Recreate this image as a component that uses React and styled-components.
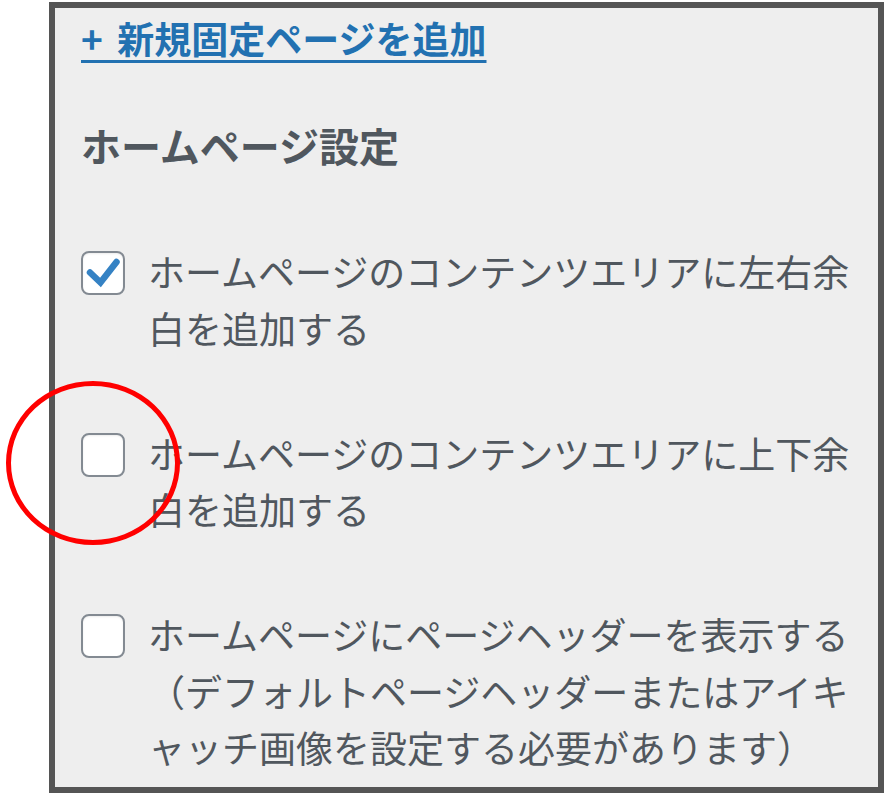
import React from 'react';
import styled, { createGlobalStyle } from 'styled-components';

const GlobalStyle = createGlobalStyle`
  html, body { margin: 0; padding: 0; background: #ffffff; }
  body { font-family: "Noto Sans CJK JP", "Noto Sans", sans-serif; }
`;

const Page = styled.div`
  position: relative;
  width: 886px;
  height: 794px;
  padding: 2px 0 0 49px;
  box-sizing: border-box;
  overflow: hidden;
`;

const Panel = styled.section`
  width: 835px;
  height: 791px;
  box-sizing: border-box;
  border: 6px solid #555555;
  background: #eeeeee;
  padding: 2px 20px 0 26px;
  overflow: hidden;
  display: flex;
  flex-direction: column;
`;

const AddLink = styled.a`
  align-self: flex-start;
  font-size: 37px;
  line-height: 56.5px;
  font-weight: 700;
  color: #2271b1;
  text-decoration: underline;
  text-decoration-thickness: 3px;
  text-underline-offset: 6px;
  word-spacing: 6px;
  cursor: pointer;
`;

const Heading = styled.h3`
  margin: 49px 0 0;
  font-size: 40px;
  line-height: 58.8px;
  font-weight: 700;
  color: #50575e;
`;

const Options = styled.div`
  margin-top: 69px;
  display: flex;
  flex-direction: column;
  gap: 68.5px;
`;

const Option = styled.label`
  display: flex;
  align-items: flex-start;
  gap: 23px;
`;

const Box = styled.span`
  position: relative;
  flex-shrink: 0;
  width: 44px;
  height: 44px;
  margin-top: 8px;
  box-sizing: border-box;
  border: 2px solid #838a92;
  border-radius: 8px;
  background: #ffffff;
  box-shadow: inset 0 1px 2px rgba(0, 0, 0, 0.08);
`;

const CheckIcon = styled.svg`
  position: absolute;
  left: -2px;
  top: -2px;
`;

const LabelText = styled.span`
  flex: 1;
  font-size: 37px;
  line-height: 56.5px;
  color: #50575e;
  line-break: normal;
`;

const Annotation = styled.div`
  position: absolute;
  left: 6px;
  top: 381px;
  width: 174px;
  height: 164px;
  box-sizing: border-box;
  border: 5px solid #ff0000;
  border-radius: 50%;
  pointer-events: none;
`;

const CheckBox = ({ checked }) => (
  <Box>
    {checked && (
      <CheckIcon width="44" height="44" viewBox="0 0 44 44">
        <path
          d="M9 21.5 L19.5 31.5 L35.5 11"
          fill="none"
          stroke="#3582c4"
          strokeWidth="6.5"
          strokeLinecap="round"
          strokeLinejoin="miter"
        />
      </CheckIcon>
    )}
  </Box>
);

const options = [
  { checked: true, text: 'ホームページのコンテンツエリアに左右余白を追加する' },
  { checked: false, text: 'ホームページのコンテンツエリアに上下余白を追加する' },
  {
    checked: false,
    text: 'ホームページにページヘッダーを表示する（デフォルトページヘッダーまたはアイキャッチ画像を設定する必要があります）',
  },
];

export default function App() {
  return (
    <>
      <GlobalStyle />
      <Page lang="ja">
        <Panel>
          <AddLink>+ 新規固定ページを追加</AddLink>
          <Heading>ホームページ設定</Heading>
          <Options>
            {options.map((o, i) => (
              <Option key={i}>
                <CheckBox checked={o.checked} />
                <LabelText>{o.text}</LabelText>
              </Option>
            ))}
          </Options>
        </Panel>
        <Annotation />
      </Page>
    </>
  );
}
